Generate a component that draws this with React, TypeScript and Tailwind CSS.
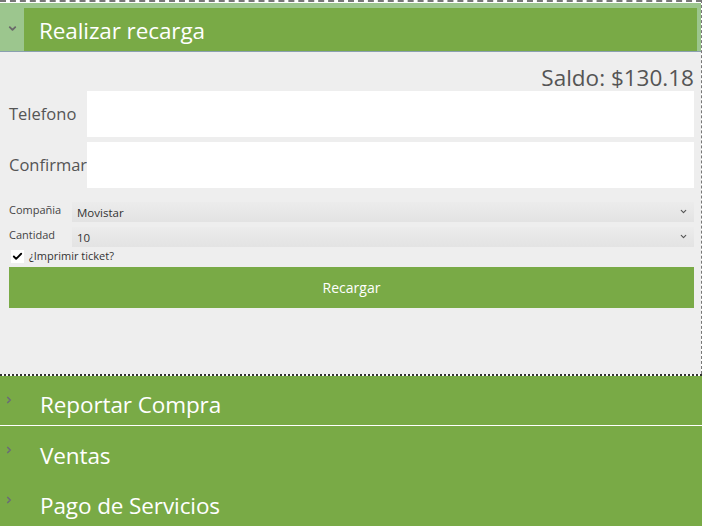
import { ChevronDown, ChevronRight, Check } from "lucide-react";

const font = { fontFamily: "'Open Sans', 'Noto Sans', sans-serif" };

function SectionRow({ title, divider }: { title: string; divider?: boolean }) {
  return (
    <div
      className={`flex h-[50px] items-center bg-[#79aa46] ${divider ? "border-b border-white" : ""}`}
    >
      <div className="flex w-[40px] justify-start pl-[4px] pb-[2px]">
        <ChevronRight className="h-[10px] w-[10px] text-[#6b6b7a]" strokeWidth={4} />
      </div>
      <span className="pt-[10px] text-[22.5px] leading-none tracking-[-0.1px] text-white">{title}</span>
    </div>
  );
}

function SelectRow({ label, value }: { label: string; value: string }) {
  return (
    <div className="flex h-[25px] items-center">
      <span className="w-[63px] pb-[3px] text-[11px] text-[#444]">{label}</span>
      <div className="flex h-[20px] flex-1 items-center justify-between bg-gradient-to-b from-[#ececec] to-[#e3e3e3] pl-[5px] pr-[6px]">
        <span className="pt-[2px] text-[11.5px] text-[#333]">{value}</span>
        <ChevronDown className="h-[9px] w-[9px] text-[#555]" strokeWidth={3} />
      </div>
    </div>
  );
}

export default function App() {
  return (
    <div className="h-[527px] w-[702px] overflow-hidden bg-white" style={font}>
      {/* Open section */}
      <div className="border-r border-t-2 border-dashed border-[#777] pt-[1px]">
        <div className="flex h-[49px] border-b border-[#8aa0b0] bg-[#9cc68e] pr-[4px]">
          <div className="flex w-[24px] items-center justify-center pt-[2px]">
            <ChevronDown className="h-[11px] w-[11px] text-[#6a6a6a]" strokeWidth={4} />
          </div>
          <div className="mt-[5px] flex flex-1 items-center bg-[#79aa46] pl-[15px]">
            <span className="pt-[3px] text-[22.5px] leading-none tracking-[-0.1px] text-white">Realizar recarga</span>
          </div>
        </div>

        <div className="h-[322px] bg-[#eeeeee] pl-[9px] pr-[7px]">
          <div className="flex h-[38px] items-end justify-end pb-[1px] text-[22.5px] leading-none text-[#555]">
            Saldo: $130.18
          </div>
          <div className="mt-[1px] flex h-[46px] items-center">
            <span className="w-[78px] text-[16.5px] text-[#555]">Telefono</span>
            <div className="h-full flex-1 bg-white" />
          </div>
          <div className="mt-[5px] flex h-[46px] items-center">
            <span className="w-[78px] whitespace-nowrap text-[16.5px] text-[#555]">Confirmar</span>
            <div className="h-full flex-1 bg-white" />
          </div>
          <div className="mt-[11px]">
            <SelectRow label="Compañia" value="Movistar" />
            <SelectRow label="Cantidad" value="10" />
          </div>
          <div className="flex h-[14px] items-center gap-[5px] pl-[2px]">
            <span className="flex h-[13px] w-[13px] items-center justify-center bg-white">
              <Check className="h-[11px] w-[11px] text-black" strokeWidth={4} />
            </span>
            <span className="text-[11px] text-[#333]">¿Imprimir ticket?</span>
          </div>
          <button className="mt-[4px] flex h-[41px] w-full items-center justify-center bg-[#79aa46] text-[14px] text-white">
            Recargar
          </button>
        </div>
      </div>

      <div className="border-t-2 border-dotted border-[#333]" />

      <SectionRow title="Reportar Compra" divider />
      <SectionRow title="Ventas" />
      <SectionRow title="Pago de Servicios" />
    </div>
  );
}
